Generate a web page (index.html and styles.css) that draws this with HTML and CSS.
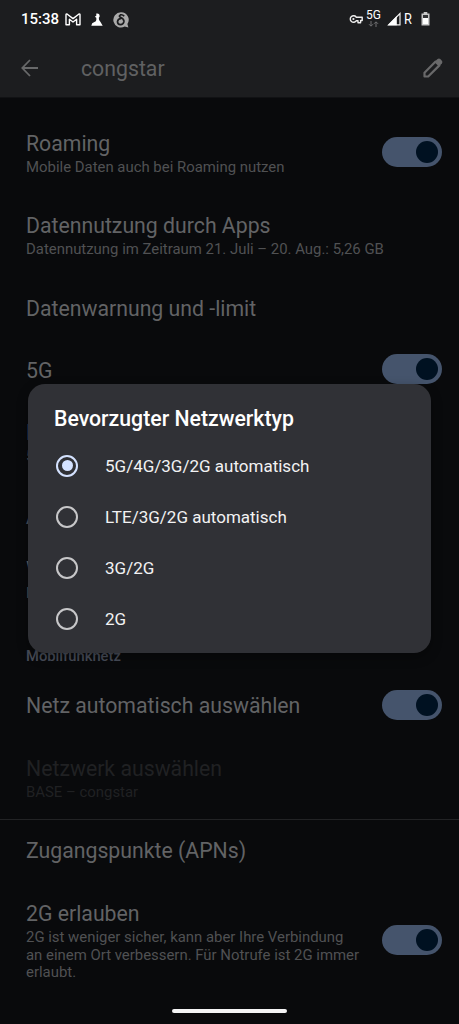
FILE: index.html
```html
<!DOCTYPE html>
<html lang="de">
<head>
<meta charset="utf-8">
<title>congstar</title>
<link rel="stylesheet" href="styles.css">
</head>
<body>
<div class="screen">
  <header class="header">
    <div class="status">
      <span class="clock">15:38</span>
      <svg class="mail" width="16" height="13" viewBox="0 0 16 13"><path d="M1 11.7V1.8Q1 .8 2 1L8 5.6 14 1Q15 .8 15 1.8V11.7H11.6V6.3L8 9 4.4 6.3V11.7Z" fill="none" stroke="#fff" stroke-width="1.4" stroke-linejoin="round"/></svg>
      <svg class="chess" width="12" height="13" viewBox="0 0 12 13"><path d="M5.3.6Q8.9 0 8.6 3.8L7.8 4.8Q7.6 7.8 9.5 9L11.7 12.7H.3L1.2 10.2 4.8 8.2Q5.7 7 5.3 4.8L3.8 3.8 5.3 2.8Z" fill="#fff"/></svg>
      <svg class="delta" width="16" height="16" viewBox="0 0 16 16"><path d="M8 .3A7.5 7.5 0 0 1 14.4 12L15.4 15.5 11.7 14.5A7.6 7.6 0 1 1 8 .3Z" fill="#aaa"/><path d="M11.2 4.3Q9.6 2.3 7.4 2.9 5.2 4 7.8 5.6 11.3 7.3 10.9 9.9 10.2 12.7 7.6 12.7 4.5 12.5 4.5 9.7 4.8 6.8 8.2 6.4" fill="none" stroke="#1c1d1f" stroke-width="1.7"/></svg>
      <div class="signals">
        <svg class="key" width="14" height="10" viewBox="0 0 14 10"><path d="M7.4 3.3A3.3 3.3 0 1 0 7.4 6.7H9V8.7H11.6V6.5H13.2V3.3Z" fill="none" stroke="#eee" stroke-width="1.4" stroke-linejoin="round"/><circle cx="4.4" cy="5" r="1.1" fill="#eee"/></svg>
        <div class="net"><span>5G</span><svg width="11" height="6" viewBox="0 0 11 6"><path d="M3 0V5M1 3.2 3 5.2 5 3.2M8 6V1M6 2.8 8 .8 10 2.8" fill="none" stroke="#707173" stroke-width="1"/></svg></div>
        <svg class="bars" width="14" height="14" viewBox="0 0 14 14"><path d="M1.6 12.9 13 1.5V12.9Z" fill="none" stroke="#eee" stroke-width="1.2"/><path d="M.8 13.3 9.8 4V13.3Z" fill="#fff"/></svg>
        <span class="roam">R</span>
        <svg class="battery" width="9" height="14" viewBox="0 0 9 14"><path d="M2.7 0H6.3V1.4H8.5V13.5H.5V1.4H2.7Z" fill="#c8c8c8"/><path d="M2 3H7V6H2Z" fill="#333436"/><path d="M2 6H7V12H2Z" fill="#fff"/></svg>
      </div>
    </div>
    <div class="toolbar">
      <svg width="18" height="18" viewBox="0 0 18 18"><path d="M9 1 1.3 9 9 17M1.5 9H17" fill="none" stroke="#68696a" stroke-width="1.8"/></svg>
      <h1 class="heading">congstar</h1>
      <svg width="20" height="20" viewBox="0 0 20 20"><path d="M1.5 14.8 12.6 3.6 16.4 7.4 5.2 18.5H1.5Z" fill="none" stroke="#69696a" stroke-width="2.2" stroke-linejoin="round"/><path d="M11.8 3.7 14.5 1.1Q16 0 17.3 1.1L18.9 2.7Q20 4 18.9 5.4L16.3 8.1Z" fill="#69696a"/></svg>
    </div>
  </header>

  <main class="list">
    <div class="row"><div class="copy"><div class="title">Roaming</div><div class="sub">Mobile Daten auch bei Roaming nutzen</div></div><span class="switch"></span></div>
    <div class="row"><div class="copy"><div class="title">Datennutzung durch Apps</div><div class="sub">Datennutzung im Zeitraum 21. Juli – 20. Aug.: 5,26 GB</div></div></div>
    <div class="row"><div class="copy"><div class="title">Datenwarnung und -limit</div></div></div>
    <div class="row"><div class="copy"><div class="title">5G</div></div><span class="switch"></span></div>
    <div class="row"><div class="copy"><div class="title">Bevorzugter Netzwerktyp</div><div class="sub">5G/4G/3G/2G automatisch</div></div></div>
    <div class="category">Anrufe</div>
    <div class="row"><div class="copy"><div class="title">WLAN-Anrufe</div><div class="sub">Mobilfunknetz</div></div></div>
    <div class="category">Mobilfunknetz</div>
    <div class="row"><div class="copy"><div class="title">Netz automatisch auswählen</div></div><span class="switch"></span></div>
    <div class="row disabled"><div class="copy"><div class="title">Netzwerk auswählen</div><div class="sub">BASE – congstar</div></div></div>
    <div class="row divided"><div class="copy"><div class="title">Zugangspunkte (APNs)</div></div></div>
    <div class="row last"><div class="copy"><div class="title">2G erlauben</div><div class="sub">2G ist weniger sicher, kann aber Ihre Verbindung<br>an einem Ort verbessern. Für Notrufe ist 2G immer<br>erlaubt.</div></div><span class="switch"></span></div>
  </main>

  <section class="dialog">
    <h2 class="dialog-title">Bevorzugter Netzwerktyp</h2>
    <div class="option"><span class="radio checked"></span><span>5G/4G/3G/2G automatisch</span></div>
    <div class="option"><span class="radio"></span><span>LTE/3G/2G automatisch</span></div>
    <div class="option"><span class="radio"></span><span>3G/2G</span></div>
    <div class="option"><span class="radio"></span><span>2G</span></div>
  </section>
  <div class="home-bar"></div>
</div>
</body>
</html>
```
FILE: styles.css
```css
* { box-sizing: border-box; }
body { margin: 0; background: #090a0c; font-family: Roboto, "Liberation Sans", sans-serif; }
.screen { position: relative; width: 459px; height: 1024px; overflow: hidden; background: #090a0c; }
svg { display: block; flex: none; }

.header { height: 98px; background: #1c1d1f; border-bottom: 1px solid #111214; }
.status { display: flex; align-items: center; height: 38px; padding: 0 29px 0 21px; color: #fff; }
.clock { width: 38px; font-size: 15px; font-weight: 500; line-height: 38px; white-space: nowrap; }
.mail { margin-left: 6px; }
.chess { margin-left: 10px; }
.delta { margin-left: 10px; margin-top: 1px; }
.signals { display: flex; align-items: center; margin-left: auto; }
.net { width: 16px; margin-left: 3px; margin-top: -1px; font-size: 12px; line-height: 11px; }
.net svg { margin: 0 0 0 2px; }
.bars { margin-left: 5px; margin-top: -1px; }
.roam { width: 10px; margin-left: 3px; font-size: 15px; line-height: 38px; transform: scaleX(.85); transform-origin: left; }
.battery { margin-left: 7px; }

.toolbar { display: flex; align-items: center; height: 60px; padding: 0 16px 0 21px; }
.heading { flex: 1; margin: 1px 0 0 42px; font-size: 21.25px; font-weight: 400; line-height: 28px; color: #606162; }

.list { padding-top: 14px; }
.row { display: flex; align-items: center; padding: 18.6px 17px 18.6px 26px; }
.copy { flex: 1; white-space: nowrap; }
.title { font-size: 21.25px; line-height: 25px; color: #626365; }
.sub { margin-top: 3px; font-size: 14.92px; line-height: 17.4px; color: #505153; }
.disabled .title, .disabled .sub { color: #202123; }
.divided { box-shadow: 0 -1px #222325; }
.last { padding-top: 19.4px; }
.category { height: 54px; padding: 26px 26px 0; font-size: 14.75px; font-weight: 500; line-height: 18px; color: #484d59; }

.switch { flex: none; display: flex; align-items: center; justify-content: flex-end; width: 60px; height: 30px; margin: -6px 0 -4px; padding-right: 4px; border-radius: 15px; background: #45546c; }
.switch::after { content: ""; width: 22px; height: 22px; border-radius: 50%; background: #001121; }

.dialog { position: absolute; left: 28px; top: 384px; width: 403px; height: 269px; padding: 21px 26px; border-radius: 17px; background: #303136; box-shadow: 0 4px 12px #0005; color: #f2f2f3; }
.dialog-title { margin: 0 0 7px; font-size: 21.25px; font-weight: 500; line-height: 28px; color: #fff; white-space: nowrap; }
.option { display: flex; align-items: center; height: 51px; gap: 27px; font-size: 17px; white-space: nowrap; }
.radio { display: flex; align-items: center; justify-content: center; width: 22px; height: 22px; margin-left: 2px; border: 2px solid #c7c7c9; border-radius: 50%; }
.checked { border-color: #d4e2ff; }
.checked::after { content: ""; width: 11px; height: 11px; border-radius: 50%; background: #d4e2ff; }
.home-bar { position: absolute; left: 172px; top: 1009px; width: 115px; height: 4px; border-radius: 2px; background: #f4f4f5; }
```
